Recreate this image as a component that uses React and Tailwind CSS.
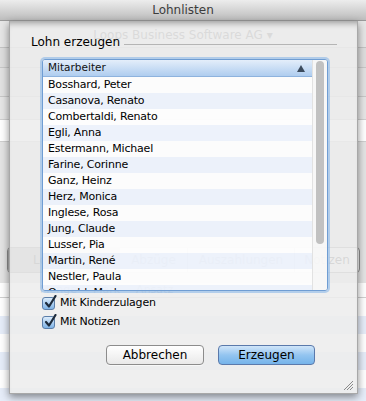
const FONT = { fontFamily: '"DejaVu Sans", "Liberation Sans", sans-serif' };

const EMPLOYEES = [
  'Bosshard, Peter',
  'Casanova, Renato',
  'Combertaldi, Renato',
  'Egli, Anna',
  'Estermann, Michael',
  'Farine, Corinne',
  'Ganz, Heinz',
  'Herz, Monica',
  'Inglese, Rosa',
  'Jung, Claude',
  'Lusser, Pia',
  'Martin, René',
  'Nestler, Paula',
  'Oswald, Markus',
];

// ── Window behind the sheet ───────────────────────────────────
function TitleBar() {
  return (
    <div className="h-[21px] flex items-center justify-center bg-gradient-to-b from-[#ededed] to-[#bdbdbd] border-b border-[#9a9a9a]">
      <span className="text-[12px] text-[#3c3c3c]">Lohnlisten</span>
    </div>
  );
}

function Segments() {
  const segs = [
    { label: 'Lohnarten', w: 'w-[111px]', active: true },
    { label: 'Abzüge', w: 'w-[68px]' },
    { label: 'Auszahlungen', w: 'w-[107px]' },
    { label: 'Notizen', w: 'flex-1' },
  ];
  return (
    <div className="mx-[7px] mr-[6px] h-[26px] flex rounded-[4px] border border-[#8e8e8e] bg-[#f2f2f2] overflow-hidden">
      {segs.map((s, i) => (
        <div key={s.label}
          className={`${s.w} flex items-center justify-center text-[12px] text-[#555] ${i > 0 ? 'border-l border-[#a0a0a0]' : ''} ${s.active ? 'bg-[#b0b0b0]' : ''}`}>
          {s.label}
        </div>
      ))}
    </div>
  );
}

function WindowBody() {
  return (
    <div className="flex flex-col">
      <div className="h-[27px] flex justify-center pt-[5px] border-b border-[#c4c4c4] bg-[#e6e6e6]">
        <span className="text-[12px] text-[#6a6a6a]">Loops Business Software AG ▾</span>
      </div>
      <div className="h-[20px] border-b border-[#c8c8c8] bg-[#dedede]" />
      <div className="h-[29px] border-b border-[#c8c8c8] bg-[#e2e2e2]" />
      <div className="h-[23px] border-b border-[#cfcfcf] bg-[#e6e6e6]" />
      <div className="h-[22px] border-b border-[#cfcfcf] bg-white" />
      <div className="h-[105px] bg-[#e4e4e4]" />
      <Segments />
      <div className="h-[10px]" />
      <div className="h-[15px] flex items-center gap-[16px] pl-[40px] text-[11px] text-[#777] bg-white border-b border-[#d0d0d0]">
        <span>Menge</span><span>Mark</span><span>Ansatz</span>
      </div>
      {Array.from({ length: 6 }).map((_, i) => (
        <div key={i} className={`h-[18px] ${i % 2 ? 'bg-[#e6edf9]' : 'bg-white'}`} />
      ))}
    </div>
  );
}

// ── Sheet parts ───────────────────────────────────────────────
function CheckBox({ label }) {
  return (
    <div className="h-[19px] flex items-center gap-[5px]">
      <span className="relative w-[13px] h-[13px] rounded-[3px] border border-[#5b7ea9] bg-gradient-to-b from-[#dcecfb] to-[#7fb3e6] flex-shrink-0">
        <svg className="absolute -top-[3px] left-[1px] w-[13px] h-[14px]" viewBox="0 0 13 14" fill="none">
          <path d="M2 8l3 3.5L11.5 1" stroke="#1d2b3c" strokeWidth="2.2" strokeLinecap="round" strokeLinejoin="round" />
        </svg>
      </span>
      <span className="text-[11px] tracking-[-0.2px] text-black">{label}</span>
    </div>
  );
}

function EmployeeList() {
  return (
    <div className="ml-[32px] w-[286px] h-[232px] flex rounded-[3px] border border-[#6f9dd3] shadow-[0_0_0_2px_rgba(130,178,232,0.55)] overflow-hidden">
      <div className="flex-1 flex flex-col min-w-0">
        <div className="h-[17px] flex-shrink-0 flex items-center justify-between pl-[5px] pr-[7px] bg-gradient-to-b from-[#e4eefa] to-[#afcdef] border-b border-[#8eb3de]">
          <span className="text-[10.5px] text-[#111]">Mitarbeiter</span>
          <svg className="w-[8px] h-[7px]" viewBox="0 0 8 7">
            <path d="M4 0L8 7H0z" fill="#3b4b5d" />
          </svg>
        </div>
        {EMPLOYEES.map((name, i) => (
          <div key={name}
            className={`h-[16px] flex-shrink-0 flex items-center pl-[5px] text-[11px] tracking-[-0.2px] text-black ${i % 2 ? 'bg-[rgba(236,242,253,0.85)]' : 'bg-[rgba(255,255,255,0.86)]'}`}>
            {name}
          </div>
        ))}
      </div>
      <div className="w-[15px] flex-shrink-0 bg-[rgba(248,248,248,0.88)] border-l border-[#e2e2e2] pt-[1px]">
        <div className="mx-auto w-[8px] h-[183px] rounded-full bg-[#c1c1c1]" />
      </div>
    </div>
  );
}

function Sheet() {
  return (
    <div className="absolute left-[9px] top-[21px] w-[349px] h-[373px] flex flex-col bg-[rgba(236,236,236,0.86)] border-x border-b border-[#a8a8a8] shadow-[0_3px_8px_rgba(0,0,0,0.45),inset_0_7px_6px_-5px_rgba(0,0,0,0.35)]">
      <div className="h-[15px] mt-[13px] flex items-center pl-[21px] pr-[20px]">
        <span className="text-[12px] text-black">Lohn erzeugen</span>
        <div className="flex-1 h-px ml-[4px] mt-[5px] bg-[#b5b5b5]" />
      </div>

      <div className="mt-[10px]">
        <EmployeeList />
      </div>

      <div className="mt-[3px] pl-[32px] flex flex-col">
        <CheckBox label="Mit Kinderzulagen" />
        <CheckBox label="Mit Notizen" />
      </div>

      <div className="mt-[13px] flex justify-end gap-[14px] pr-[42px]">
        <button className="w-[98px] h-[20px] rounded-[4px] border border-[#8c8c8c] bg-gradient-to-b from-white to-[#e9e9e9] text-[12px] text-black shadow-[0_1px_0_rgba(255,255,255,0.6)]">
          Abbrechen
        </button>
        <button className="w-[97px] h-[20px] rounded-[4px] border border-[#5a79ab] bg-gradient-to-b from-[#d0e5f9] via-[#94c5f0] to-[#74b3ea] text-[12px] text-black">
          Erzeugen
        </button>
      </div>

      {/* resize grip */}
      <svg className="absolute right-[3px] bottom-[2px] w-[11px] h-[11px]" viewBox="0 0 11 11">
        <path d="M1 10L10 1M4 10L10 4M7 10L10 7" stroke="#8a8a8a" strokeWidth="1" />
      </svg>
    </div>
  );
}

export default function App() {
  return (
    <div className="relative w-[366px] h-[401px] overflow-hidden bg-[#e4e4e4]" style={FONT}>
      <TitleBar />
      <WindowBody />
      <Sheet />
    </div>
  );
}
